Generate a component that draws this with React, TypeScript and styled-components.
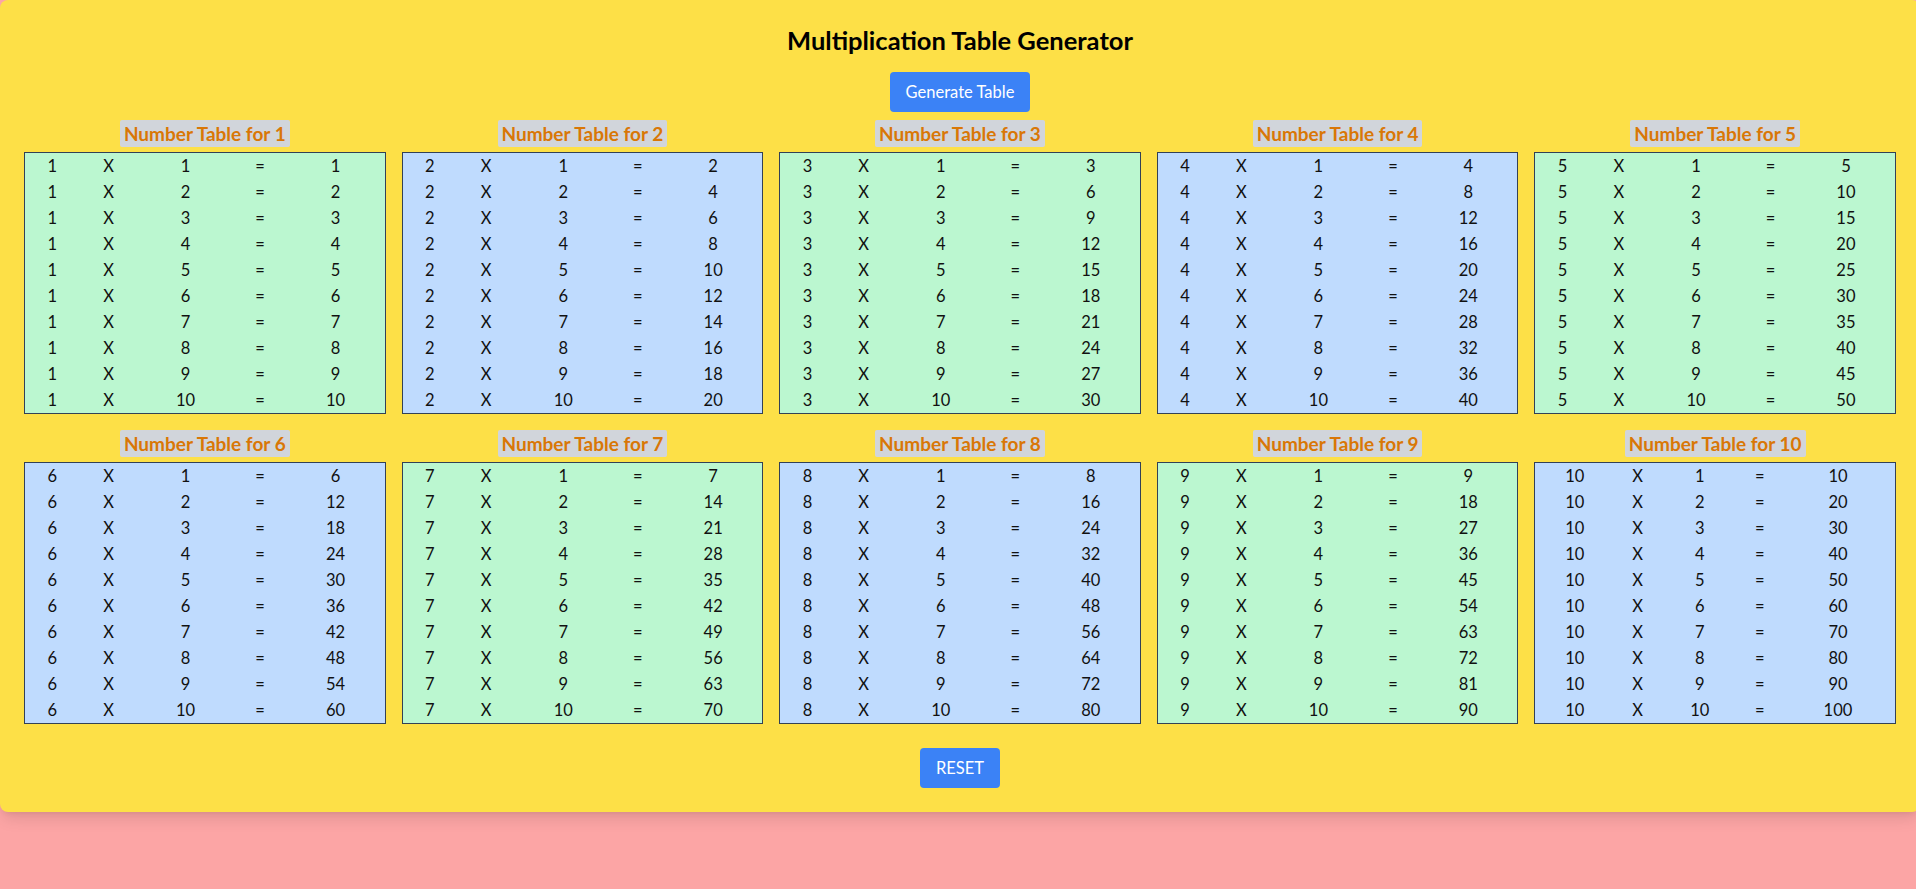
import React, { useState } from 'react'
import styled, { createGlobalStyle } from 'styled-components'

const GlobalStyle = createGlobalStyle`
  * { box-sizing: border-box; }
  html, body {
    margin: 0;
    padding: 0;
    overflow-x: hidden;
  }
  body {
    background: #fca5a5;
    min-height: 100vh;
    font-family: Lato, "Noto Sans", sans-serif;
    color: #111827;
  }
`

const numbers = [1, 2, 3, 4, 5, 6, 7, 8, 9, 10]

const App = () => {
  const [visible, setVisible] = useState(true)

  return (
    <>
      <GlobalStyle />
      <Card>
        <Title>Multiplication Table Generator</Title>
        <ActionButton $gap={16} onClick={() => setVisible(true)}>
          Generate Table
        </ActionButton>
        {visible && (
          <Grid>
            {numbers.map(n => (
              <TableBlock key={n}>
                <TableLabel>Number Table for {n}</TableLabel>
                <Table $tone={n % 2 === 1 ? 'green' : 'blue'}>
                  <tbody>
                    {numbers.map(m => (
                      <tr key={m}>
                        <Cell>{n}</Cell>
                        <Cell>X</Cell>
                        <Cell>{m}</Cell>
                        <Cell>=</Cell>
                        <Cell>{n * m}</Cell>
                      </tr>
                    ))}
                  </tbody>
                </Table>
              </TableBlock>
            ))}
          </Grid>
        )}
        <ActionButton $gap={24} onClick={() => setVisible(false)}>
          RESET
        </ActionButton>
      </Card>
    </>
  )
}

export default App

const Card = styled.div`
  width: 1920px;
  padding: 24px;
  background: #fde047;
  border-radius: 8px;
  box-shadow: 0 10px 15px -3px rgba(0, 0, 0, 0.1), 0 4px 6px -4px rgba(0, 0, 0, 0.1);
  display: flex;
  flex-direction: column;
  align-items: center;
`

const Title = styled.h1`
  margin: 0;
  font-size: 25.5px;
  line-height: 32px;
  font-weight: 700;
  color: #000;
`

const ActionButton = styled.button<{ $gap: number }>`
  margin-top: ${p => p.$gap}px;
  height: 40px;
  padding: 0 16px;
  border: none;
  border-radius: 4px;
  background: #3b82f6;
  color: #fff;
  font-family: inherit;
  font-size: 16.5px;
  cursor: pointer;
`

const Grid = styled.div`
  width: 100%;
  margin-top: 8px;
  display: grid;
  grid-template-columns: repeat(5, 1fr);
  gap: 16px;
`

const TableBlock = styled.div`
  display: flex;
  flex-direction: column;
  align-items: center;
  gap: 5px;
`

const TableLabel = styled.h2`
  margin: 0;
  padding: 0 4px;
  background: #d1d5db;
  border-radius: 2px;
  color: #d97706;
  font-size: 19px;
  line-height: 27px;
  font-weight: 700;
`

const Table = styled.table<{ $tone: 'green' | 'blue' }>`
  width: 100%;
  border-collapse: collapse;
  border: 1px solid #334155;
  background: ${p => (p.$tone === 'green' ? '#bbf7d0' : '#bfdbfe')};
  font-size: 16.5px;
  line-height: 24px;
`

const Cell = styled.td`
  padding: 1px;
  text-align: center;
  color: #111;
`
